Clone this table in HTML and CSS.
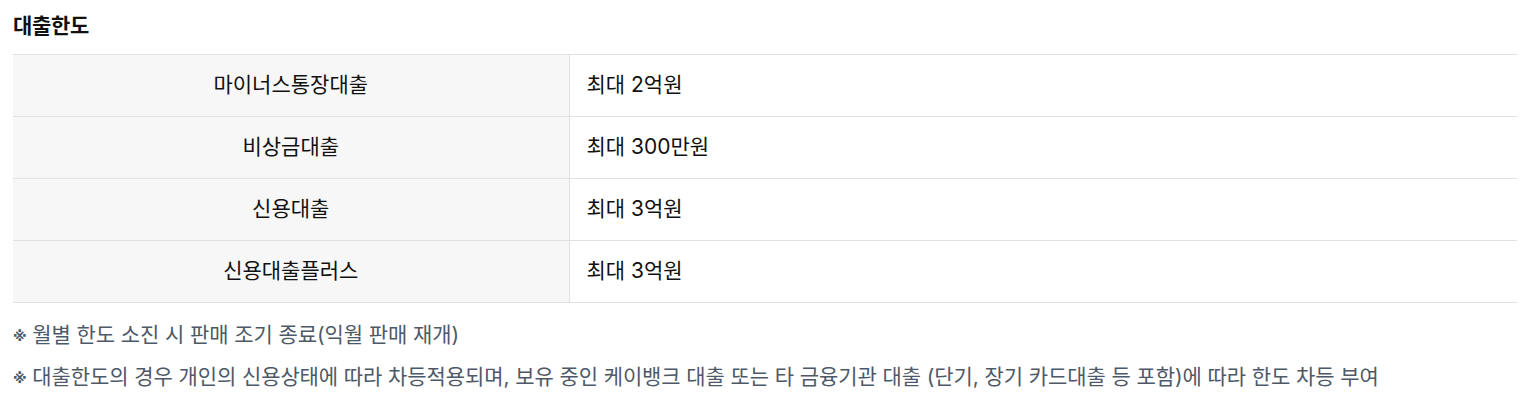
FILE: index.html
```html
<!DOCTYPE html>
<html lang="ko">
<head>
<meta charset="utf-8">
<link rel="stylesheet" href="styles.css">
</head>
<body>
<section class="limit">
  <h2 class="title">대출한도</h2>
  <table class="tbl">
    <tbody>
      <tr><th>마이너스통장대출</th><td>최대 2억원</td></tr>
      <tr><th>비상금대출</th><td>최대 300만원</td></tr>
      <tr><th>신용대출</th><td>최대 3억원</td></tr>
      <tr><th>신용대출플러스</th><td>최대 3억원</td></tr>
    </tbody>
  </table>
  <ul class="notes">
    <li><span class="mark">※</span> 월별 한도 소진 시 판매 조기 종료(익월 판매 재개)</li>
    <li><span class="mark">※</span> 대출한도의 경우 개인의 신용상태에 따라 차등적용되며, 보유 중인 케이뱅크 대출 또는 타 금융기관 대출 (단기, 장기 카드대출 등 포함)에 따라 한도 차등 부여</li>
  </ul>
</section>
</body>
</html>
```

FILE: styles.css
```css
* { box-sizing: border-box; }
html, body { margin: 0; padding: 0; background: #fff; }
body {
  font-family: Inter, "Noto Sans CJK KR", sans-serif;
  color: #111;
}
.limit {
  padding: 11px 21px 0 13px;
}
.title {
  margin: 0 0 13px;
  font-size: 21px;
  line-height: 30px;
  font-weight: 700;
  color: #111;
  letter-spacing: -0.3px;
}
.tbl {
  width: 100%;
  border-collapse: collapse;
  border-top: 1px solid #e1e1e1;
}
.tbl th, .tbl td {
  height: 62px;
  border-bottom: 1px solid #e1e1e1;
  font-size: 21px;
  line-height: 30px;
  font-weight: 400;
  padding: 0 0 2px;
  vertical-align: middle;
  color: #111;
}
.tbl th {
  width: 556px;
  background: #f7f7f7;
  text-align: center;
  border-right: 1px solid #e1e1e1;
}
.tbl td {
  text-align: left;
  padding-left: 17px;
  background: #fff;
}
.notes {
  list-style: none;
  margin: 0;
  padding: 11px 0 0;
}
.notes li {
  font-size: 21px;
  line-height: 42px;
  height: 42px;
  color: #4e5968;
  letter-spacing: -0.1px;
}
.mark {
  font-family: "DejaVu Sans", sans-serif;
  font-size: 14px;
  font-weight: 700;
  line-height: 0;
  vertical-align: 1px;
}
```
